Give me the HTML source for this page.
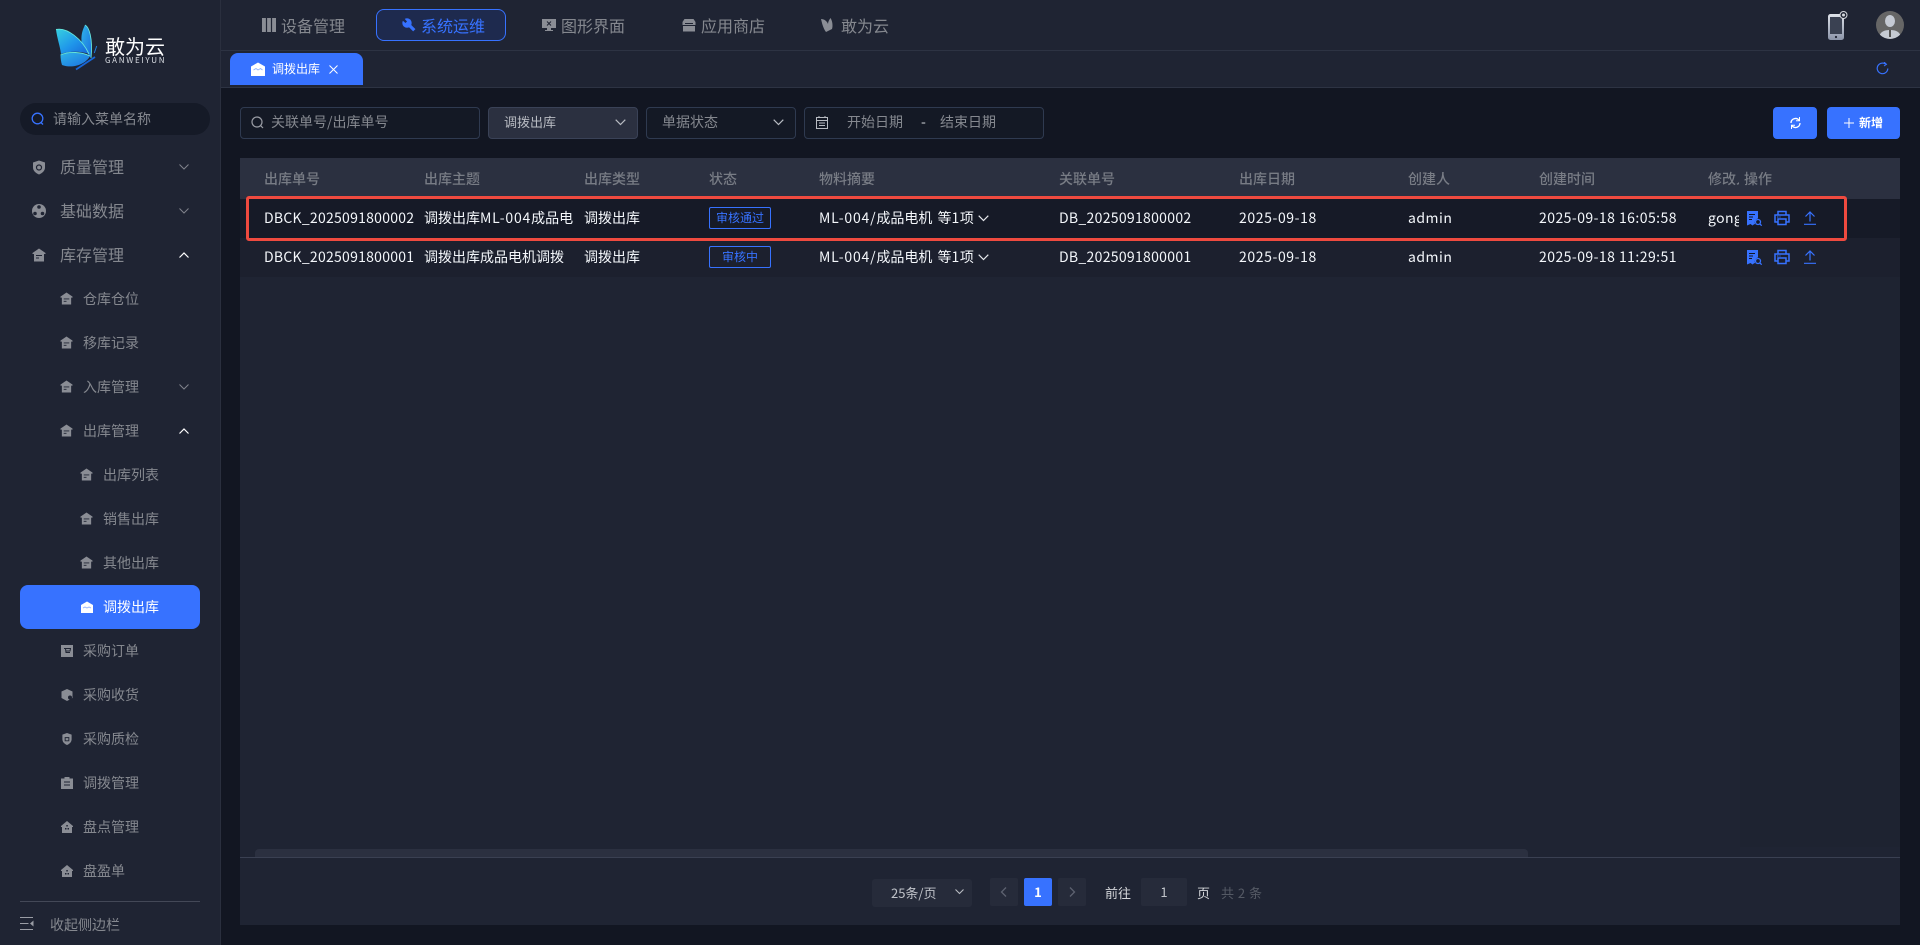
<!DOCTYPE html>
<html lang="zh-CN"><head><meta charset="utf-8"><title>调拨出库</title>
<style>
*{box-sizing:border-box}
html,body{margin:0;padding:0;width:1920px;height:945px;overflow:hidden;background:#121622;font-family:"Noto Sans CJK SC","Liberation Sans",sans-serif;font-size:14px;color:#fff}
.a,.t,svg.i{position:absolute}
.t{white-space:nowrap;line-height:20px;height:20px}
.m{color:#85888f}
.h{color:#787c85;font-weight:500;font-size:14px}
.c{color:#f4f7fb;font-size:14px}
svg{display:block}
</style></head><body>
<svg width="0" height="0" style="position:absolute"><defs>
<symbol id="house" viewBox="0 0 14 14"><path d="M7 .5 13.500 5v1H12v7.500H2V6H.5V5z" fill="#8a8d95"/><path d="M4 7h6v1H4zM4 9.500h3v1H4z" fill="#1f2433"/></symbol>
<symbol id="dn" viewBox="0 0 10 6"><path d="M.5.500 5 5 9.500.500" fill="none" stroke="#80838c" stroke-width="1"/></symbol>
<symbol id="up" viewBox="0 0 10 6"><path d="M.5 5.500 5 1l4.500 4.500" fill="none" stroke="#fff" stroke-width="1.200"/></symbol>
<symbol id="doc" viewBox="0 0 16 16"><path d="M1 1h11v7.500a4 4 0 0 0-2.500 6.200L8.500 14 6.500 15.500 4.500 14 1 15.500z" fill="#3772ff"/><path d="M3 4.500h6M3 7h4M3 9.500h3" stroke="#121622" stroke-width="1"/><circle cx="12" cy="12" r="2.500" fill="none" stroke="#3772ff" stroke-width="1.300"/><path d="M14 14l1.700 1.700" stroke="#3772ff" stroke-width="1.300"/></symbol>
<symbol id="pr" viewBox="0 0 16 16"><path d="M4 5V1.500h8V5M4 12H1V5h14v7h-3M4 9h8v5.500H4z" fill="none" stroke="#3772ff" stroke-width="1.500"/><path d="M3 7h1.500M5.500 7h1" stroke="#3772ff"/></symbol>
<symbol id="upl" viewBox="0 0 14 14"><path d="M7 10.500V1M2.500 5.500 7 1l4.500 4.500M1 13.300h12" fill="none" stroke="#3772ff" stroke-width="1.200"/></symbol>
</defs></svg>

<!-- Sidebar -->
<div class="a" style="left:0;top:0;width:221px;height:945px;background:#1f2433;border-right:1px solid #2a2f3e"></div>
<svg class="i" style="left:55px;top:24px" width="50" height="48" viewBox="0 0 50 48"><defs><linearGradient id="lg" x1="0" y1="0" x2="1" y2="1"><stop offset="0" stop-color="#36d0e0"/><stop offset=".55" stop-color="#1f96ea"/><stop offset="1" stop-color="#1766d8"/></linearGradient><linearGradient id="lg2" x1="0" y1="0" x2="1" y2="1"><stop offset="0" stop-color="#2fb4e8"/><stop offset="1" stop-color="#1a6fe0"/></linearGradient></defs>
<path d="M30 1C34 3 38 14 36 34 32 28 26 22 26.500 17 26 10 28 5 30 1z" fill="url(#lg2)"/>
<path d="M1 5.500C12 3 27 15 34 30 26 27 14 27 6 30 5 22 2 14 1 5.500z" fill="url(#lg)"/>
<path d="M5.500 31C14 27 27 28 35 32 31 40 18 45 7 41 6 38 5.500 34 5.500 31z" fill="url(#lg2)"/>
<path d="M21 45.500 40 33" stroke="#1766d8" stroke-width="1.800" fill="none"/>
<path d="M5.500 31C14 27 27 28 35 32M1 5.500C12 3 27 15 34 30M30 1C34 3 38 14 36 34" stroke="#66e6dc" stroke-width=".9" fill="none"/>
<path d="M41.700 22l-2.400 7" stroke="#1f7ee0"/></svg>
<div class="t" style="left:105px;top:34px;font-size:20px;line-height:24px;height:24px;color:#fff">敢为云</div>
<div class="t" style="left:105px;top:56px;font-size:8px;line-height:10px;height:10px;letter-spacing:1.700px;color:#d8dce2">GANWEIYUN</div>

<div class="a" style="left:20px;top:103px;width:190px;height:32px;border-radius:16px;background:#151a27"></div>
<svg class="i" style="left:31px;top:112px" width="14" height="14" viewBox="0 0 14 14"><circle cx="6.500" cy="6.500" r="5.300" fill="none" stroke="#3772ff" stroke-width="1.300"/><path d="M10 10.500l2 2" stroke="#3772ff" stroke-width="1.300"/></svg>
<div class="t m" style="left:53px;top:109px">请输入菜单名称</div>

<svg class="i" style="left:32px;top:160px" width="14" height="15" viewBox="0 0 14 15"><path d="M7 .5 13 2.500v5c0 3.500-3 5.800-6 7-3-1.200-6-3.500-6-7v-5z" fill="#8a8d95"/><circle cx="7" cy="7.500" r="2.500" fill="none" stroke="#1f2433" stroke-width="1.200"/></svg>
<div class="t m" style="left:60px;top:156px;font-size:16px">质量管理</div>
<svg class="i" style="left:179px;top:164px" width="10" height="6"><use href="#dn"/></svg>

<svg class="i" style="left:32px;top:204px" width="14" height="14" viewBox="0 0 14 14"><circle cx="7" cy="7" r="7" fill="#8a8d95"/><circle cx="7" cy="3" r="1.800" fill="#1f2433"/><circle cx="3" cy="9.500" r="1.800" fill="#1f2433"/><circle cx="10.500" cy="9.500" r="1.800" fill="#1f2433"/></svg>
<div class="t m" style="left:60px;top:200px;font-size:16px">基础数据</div>
<svg class="i" style="left:179px;top:208px" width="10" height="6"><use href="#dn"/></svg>

<svg class="i" style="left:32px;top:248px" width="14" height="14"><use href="#house"/></svg>
<div class="t m" style="left:60px;top:244px;font-size:16px">库存管理</div>
<svg class="i" style="left:179px;top:252px" width="10" height="6"><use href="#up"/></svg>

<svg class="i" style="left:60px;top:292px" width="13" height="13"><use href="#house"/></svg><div class="t m" style="left:83px;top:289px">仓库仓位</div>
<svg class="i" style="left:60px;top:336px" width="13" height="13"><use href="#house"/></svg><div class="t m" style="left:83px;top:333px">移库记录</div>
<svg class="i" style="left:60px;top:380px" width="13" height="13"><use href="#house"/></svg><div class="t m" style="left:83px;top:377px">入库管理</div>
<svg class="i" style="left:179px;top:384px" width="10" height="6"><use href="#dn"/></svg>
<svg class="i" style="left:60px;top:424px" width="13" height="13"><use href="#house"/></svg><div class="t m" style="left:83px;top:421px">出库管理</div>
<svg class="i" style="left:179px;top:428px" width="10" height="6"><use href="#up"/></svg>
<svg class="i" style="left:80px;top:468px" width="13" height="13"><use href="#house"/></svg><div class="t m" style="left:103px;top:465px">出库列表</div>
<svg class="i" style="left:80px;top:512px" width="13" height="13"><use href="#house"/></svg><div class="t m" style="left:103px;top:509px">销售出库</div>
<svg class="i" style="left:80px;top:556px" width="13" height="13"><use href="#house"/></svg><div class="t m" style="left:103px;top:553px">其他出库</div>

<div class="a" style="left:20px;top:585px;width:180px;height:44px;border-radius:8px;background:#3772ff"></div>
<svg class="i" style="left:81px;top:601px" width="12" height="12" viewBox="0 0 12 12"><path d="M6 .5 12 4v8H0V4z" fill="#fff"/><path d="M2 7l2-1 2 1 2-1 2 1" stroke="#8fb0ff" fill="none" stroke-width=".8"/></svg>
<div class="t" style="left:103px;top:597px;color:#fff">调拨出库</div>

<svg class="i" style="left:61px;top:645px" width="12" height="12" viewBox="0 0 12 12"><rect width="12" height="12" fill="#8a8d95"/><path d="M3 3.500h1.500l.5 4h4M5 3.500h4.500L9 6H5" fill="none" stroke="#1f2433"/></svg><div class="t m" style="left:83px;top:641px">采购订单</div>
<svg class="i" style="left:61px;top:689px" width="12" height="12" viewBox="0 0 12 12"><path d="M6 0l5.500 2.500V9L6 12 .5 9V2.500z" fill="#8a8d95"/><circle cx="9" cy="8.500" r="2" fill="#1f2433"/></svg><div class="t m" style="left:83px;top:685px">采购收货</div>
<svg class="i" style="left:61px;top:733px" width="12" height="12" viewBox="0 0 12 13"><path d="M6 0l5 1.800v5C11 10 8.500 12 6 13 3.500 12 1 10 1 6.800v-5z" fill="#8a8d95"/><path d="M4 5h4v3.500H4z" fill="none" stroke="#1f2433"/></svg><div class="t m" style="left:83px;top:729px">采购质检</div>
<svg class="i" style="left:61px;top:777px" width="12" height="12" viewBox="0 0 12 12"><path d="M0 1.500h3.500V0h5v1.500H12V12H0z" fill="#8a8d95"/><path d="M3 5h6M3 8h6" stroke="#1f2433"/></svg><div class="t m" style="left:83px;top:773px">调拨管理</div>
<svg class="i" style="left:61px;top:821px" width="12" height="12" viewBox="0 0 12 12"><path d="M6 0l6 5v1h-1v6H1V6H0V5z" fill="#8a8d95"/><path d="M4 7h1.500v1.500H4zM6.500 7H8v1.500H6.500zM5.300 4h1.500v1.500H5.300z" fill="#1f2433"/></svg><div class="t m" style="left:83px;top:817px">盘点管理</div>
<svg class="i" style="left:61px;top:865px" width="12" height="12" viewBox="0 0 12 12"><path d="M6 0l6 5v1h-1v6H1V6H0V5z" fill="#8a8d95"/><path d="M4 8h1.500v1.500H4zM6.500 8H8v1.500H6.500zM5.300 5h1.500v1.500H5.300z" fill="#1f2433"/></svg><div class="t m" style="left:83px;top:861px">盘盈单</div>

<div class="a" style="left:20px;top:901px;width:180px;height:1px;background:#434857"></div>
<svg class="i" style="left:20px;top:917px" width="14" height="13" viewBox="0 0 14 13"><path d="M0 .5h13M0 6.500h8.500M0 12.500h13" stroke="#9a9da5"/><path d="M13.500 3.500v6L10 6.500z" fill="#9a9da5"/></svg>
<div class="t m" style="left:50px;top:915px">收起侧边栏</div>

<!-- Top bar -->
<div class="a" style="left:221px;top:0;width:1699px;height:87px;background:#1f2433"></div>
<div class="a" style="left:221px;top:50px;width:1699px;height:1px;background:#2d3343"></div>
<div class="a" style="left:221px;top:87px;width:1699px;height:1px;background:#2d3343"></div>

<svg class="i" style="left:262px;top:18px" width="14" height="14" viewBox="0 0 14 14"><rect width="14" height="14" fill="#8a8d95"/><path d="M4.500 0v14M9.500 0v14" stroke="#1f2433" stroke-width="1.200"/></svg>
<div class="t m" style="left:281px;top:15px;font-size:16px">设备管理</div>

<div class="a" style="left:376px;top:9px;width:130px;height:32px;border:1px solid #3772ff;border-radius:8px;background:#1e2a4e"></div>
<svg class="i" style="left:402px;top:18px" width="14" height="14" viewBox="0 0 14 14"><circle cx="5" cy="5" r="4.700" fill="#3772ff"/><path d="M6 6l6.300 6.300" stroke="#3772ff" stroke-width="3.200"/><path d="M1.500-.5 5 3.500 3.500 5 -.5 1.500z" fill="#1e2a4e"/></svg>
<div class="t" style="left:421px;top:15px;font-size:16px;color:#3772ff">系统运维</div>

<svg class="i" style="left:542px;top:18px" width="14" height="14" viewBox="0 0 14 14"><path d="M0 1h14v9H9v2h2v1H3v-1h2v-2H0z" fill="#8a8d95"/><path d="M5 3.500l4 4M9 3.500l-4 4" stroke="#1f2433"/></svg>
<div class="t m" style="left:561px;top:15px;font-size:16px">图形界面</div>

<svg class="i" style="left:682px;top:18px" width="14" height="14" viewBox="0 0 14 14"><path d="M2.500 1h9L13.500 4v3H.5V4zM1 8h12v5.500H1z" fill="#8a8d95"/><path d="M3 5.500h8" stroke="#1f2433"/></svg>
<div class="t m" style="left:701px;top:15px;font-size:16px">应用商店</div>

<svg class="i" style="left:821px;top:18px" width="15" height="14" viewBox="0 0 15 14"><path d="M0 1c3 0 6 2 7 5 0-2 1-4 2.500-6C11.500 3 12 8 11 11l-6 3C2 10 1 5 0 1z" fill="#8a8d95"/></svg>
<div class="t m" style="left:841px;top:15px;font-size:16px">敢为云</div>

<svg class="i" style="left:1828px;top:11px" width="20" height="30" viewBox="0 0 20 30"><defs><linearGradient id="ph" x1="0" y1="0" x2="0" y2="1"><stop offset="0" stop-color="#dfe3ea"/><stop offset="1" stop-color="#8a93a8"/></linearGradient></defs><rect x="0" y="3" width="16" height="26" rx="2.500" fill="url(#ph)"/><rect x="2" y="6" width="12" height="17" fill="#3a4152"/><circle cx="8" cy="26" r="1.100" fill="#1f2433"/><circle cx="15.500" cy="4" r="3.500" fill="#1f2433" stroke="#d5d8de"/><circle cx="15.500" cy="4" r="1.500" fill="#d5d8de"/></svg>
<svg class="i" style="left:1876px;top:11px" width="28" height="28" viewBox="0 0 28 28"><defs><clipPath id="cc"><circle cx="14" cy="14" r="14"/></clipPath></defs><circle cx="14" cy="14" r="14" fill="#666"/><g clip-path="url(#cc)"><ellipse cx="14" cy="10" rx="5" ry="6" fill="#c5cad3"/><path d="M3 28c0-7 5-9 11-9s11 2 11 9z" fill="#c5cad3"/><path d="M13 19h2v7h-2z" fill="#555"/></g></svg>

<!-- Tab -->
<div class="a" style="left:230px;top:53px;width:133px;height:32px;background:#3772ff;border-radius:8px 8px 0 0"></div>
<svg class="i" style="left:251px;top:62px" width="14" height="14" viewBox="0 0 14 14"><path d="M7 .5 14 4.500V14H0V4.500z" fill="#fff"/><path d="M2.500 8l2.500-1.500L7 8l2.500-1.500L11.500 8" fill="none" stroke="#8fb0ff" stroke-width=".9"/></svg>
<div class="t" style="left:272px;top:59px;font-size:12px;color:#fff">调拨出库</div>
<svg class="i" style="left:329px;top:65px" width="9" height="9" viewBox="0 0 9 9"><path d="M.5.500l8 8M8.500.500l-8 8" stroke="#fff"/></svg>
<svg class="i" style="left:1876px;top:62px" width="13" height="13" viewBox="0 0 13 13"><path d="M11.800 6.500A5.300 5.300 0 1 1 9.500 2" fill="none" stroke="#3772ff" stroke-width="1.200"/><path d="M8 0l2.500 2.300L8 4" fill="none" stroke="#3772ff"/></svg>

<!-- Filters -->
<div class="a" style="left:240px;top:107px;width:240px;height:32px;border:1px solid #2f3a50;border-radius:4px;background:#141925"></div>
<svg class="i" style="left:251px;top:116px" width="14" height="14" viewBox="0 0 14 14"><circle cx="6" cy="6" r="5" fill="none" stroke="#9a9da5" stroke-width="1.200"/><path d="M9.500 9.500l2.500 2.500" stroke="#9a9da5" stroke-width="1.200"/></svg>
<div class="t m" style="left:271px;top:112px">关联单号/出库单号</div>

<div class="a" style="left:488px;top:107px;width:150px;height:32px;border:1px solid #3a4257;border-radius:4px;background:#2b3040"></div>
<div class="t" style="left:504px;top:112px;font-size:13px;color:#b8bbc2">调拨出库</div>
<svg class="i" style="left:615px;top:119px" width="11" height="7" viewBox="0 0 11 7"><path d="M.7.700 5.500 5.500 10.300.700" fill="none" stroke="#b8bbc2" stroke-width="1.200"/></svg>

<div class="a" style="left:646px;top:107px;width:150px;height:32px;border:1px solid #2f3a50;border-radius:4px;background:#141925"></div>
<div class="t m" style="left:662px;top:112px">单据状态</div>
<svg class="i" style="left:773px;top:119px" width="11" height="7" viewBox="0 0 11 7"><path d="M.7.700 5.500 5.500 10.300.700" fill="none" stroke="#b8bbc2" stroke-width="1.200"/></svg>

<div class="a" style="left:804px;top:107px;width:240px;height:32px;border:1px solid #2f3a50;border-radius:4px;background:#141925"></div>
<svg class="i" style="left:815px;top:115px" width="14" height="14" viewBox="0 0 14 14"><path d="M1.500 2.500h11v11h-11zM1.500 5.500h11M4 1v2M10 1v2M4 8h6M4 10.500h6" fill="none" stroke="#b8bbc2"/></svg>
<div class="t m" style="left:847px;top:112px">开始日期</div>
<div class="t m" style="left:921px;top:112px;color:#d8dade">-</div>
<div class="t m" style="left:940px;top:112px">结束日期</div>

<div class="a" style="left:1773px;top:107px;width:44px;height:32px;background:#3772ff;border-radius:4px"></div>
<svg class="i" style="left:1790px;top:117px" width="11" height="12" viewBox="0 0 11 12"><path d="M1 6a4.500 4.500 0 0 1 8-2.800M10 6a4.500 4.500 0 0 1-8 2.800" fill="none" stroke="#fff" stroke-width="1.300"/><path d="M9.500 0v3.700H6M1.500 12V8.300H5" fill="none" stroke="#fff"/></svg>
<div class="a" style="left:1827px;top:107px;width:73px;height:32px;background:#3772ff;border-radius:4px"></div>
<svg class="i" style="left:1844px;top:118px" width="10" height="10" viewBox="0 0 10 10"><path d="M5 0v10M0 5h10" stroke="#fff"/></svg>
<div class="t" style="left:1859px;top:113px;font-size:12px;font-weight:700;color:#fff">新增</div>

<!-- Table -->
<div class="a" style="left:240px;top:158px;width:1660px;height:767px;background:#1f2433"></div>
<div class="a" style="left:240px;top:158px;width:1660px;height:41px;background:#2b3040"></div>
<div class="a" style="left:240px;top:199px;width:1660px;height:39px;background:#161a27"></div>
<div class="a" style="left:240px;top:238px;width:1660px;height:39px;background:#1c202e"></div>
<div class="a" style="left:1740px;top:277px;width:160px;height:570px;background:#1e2331"></div>

<div class="t h" style="left:264px;top:169px">出库单号</div>
<div class="t h" style="left:424px;top:169px">出库主题</div>
<div class="t h" style="left:584px;top:169px">出库类型</div>
<div class="t h" style="left:709px;top:169px">状态</div>
<div class="t h" style="left:819px;top:169px">物料摘要</div>
<div class="t h" style="left:1059px;top:169px">关联单号</div>
<div class="t h" style="left:1239px;top:169px">出库日期</div>
<div class="t h" style="left:1408px;top:169px">创建人</div>
<div class="t h" style="left:1539px;top:169px">创建时间</div>
<div class="t h" style="left:1708px;top:169px;width:31px;overflow:hidden">修改人</div>
<div class="t h" style="left:1744px;top:169px">操作</div>

<div class="t c" style="left:264px;top:208px;letter-spacing:.26px">DBCK_2025091800002</div>
<div class="t c" style="left:424px;top:208px;width:150px;overflow:hidden">调拨出库<span style="letter-spacing:.8px">ML-004</span>成品电</div>
<div class="t c" style="left:584px;top:208px">调拨出库</div>
<div class="a" style="left:709px;top:207px;width:62px;height:22px;border:1px solid #3772ff;border-radius:2px;text-align:center;font-size:12px;line-height:20px;color:#3772ff">审核通过</div>
<div class="t c" style="left:819px;top:208px"><span style="letter-spacing:.8px">ML-004/</span>成品电机<span style="letter-spacing:2px"> </span>等<span style="letter-spacing:.5px">1</span>项</div>
<svg class="i" style="left:978px;top:215px" width="11" height="7" viewBox="0 0 11 7"><path d="M.7.700 5.500 5.500 10.300.700" fill="none" stroke="#e6e8ec" stroke-width="1.200"/></svg>
<div class="t c" style="left:1059px;top:208px;letter-spacing:.3px">DB_2025091800002</div>
<div class="t c" style="left:1239px;top:208px;letter-spacing:.6px">2025-09-18</div>
<div class="t c" style="left:1408px;top:208px;letter-spacing:.5px">admin</div>
<div class="t c" style="left:1539px;top:208px;letter-spacing:.45px">2025-09-18 16:05:58</div>
<div class="t c" style="left:1708px;top:208px;width:31px;overflow:hidden;letter-spacing:.4px">gongchang</div>

<div class="t c" style="left:264px;top:247px;letter-spacing:.26px">DBCK_2025091800001</div>
<div class="t c" style="left:424px;top:247px;width:150px;overflow:hidden">调拨出库成品电机调拨</div>
<div class="t c" style="left:584px;top:247px">调拨出库</div>
<div class="a" style="left:709px;top:246px;width:62px;height:22px;border:1px solid #3772ff;border-radius:2px;text-align:center;font-size:12px;line-height:20px;color:#3772ff">审核中</div>
<div class="t c" style="left:819px;top:247px"><span style="letter-spacing:.8px">ML-004/</span>成品电机<span style="letter-spacing:2px"> </span>等<span style="letter-spacing:.5px">1</span>项</div>
<svg class="i" style="left:978px;top:254px" width="11" height="7" viewBox="0 0 11 7"><path d="M.7.700 5.500 5.500 10.300.700" fill="none" stroke="#e6e8ec" stroke-width="1.200"/></svg>
<div class="t c" style="left:1059px;top:247px;letter-spacing:.3px">DB_2025091800001</div>
<div class="t c" style="left:1239px;top:247px;letter-spacing:.6px">2025-09-18</div>
<div class="t c" style="left:1408px;top:247px;letter-spacing:.5px">admin</div>
<div class="t c" style="left:1539px;top:247px;letter-spacing:.45px">2025-09-18 11:29:51</div>

<svg class="i" style="left:1746px;top:210px" width="16" height="16"><use href="#doc"/></svg>
<svg class="i" style="left:1774px;top:210px" width="16" height="16"><use href="#pr"/></svg>
<svg class="i" style="left:1803px;top:211px" width="14" height="14"><use href="#upl"/></svg>
<svg class="i" style="left:1746px;top:249px" width="16" height="16"><use href="#doc"/></svg>
<svg class="i" style="left:1774px;top:249px" width="16" height="16"><use href="#pr"/></svg>
<svg class="i" style="left:1803px;top:250px" width="14" height="14"><use href="#upl"/></svg>

<div class="a" style="left:246px;top:196px;width:1601px;height:45px;border:3px solid #ef4a3f;border-radius:3px"></div>

<div class="a" style="left:255px;top:849px;width:1273px;height:8px;background:#2b3040;border-radius:4px 4px 0 0"></div>
<div class="a" style="left:240px;top:857px;width:1660px;height:1px;background:#3a4052"></div>

<!-- Pagination -->
<div class="a" style="left:872px;top:879px;width:100px;height:28px;background:#262b3a;border-radius:3px"></div>
<div class="t" style="left:891px;top:882px;font-size:13px;line-height:22px;height:22px;color:#c0c3c9">25条/页</div>
<svg class="i" style="left:955px;top:889px" width="9" height="6" viewBox="0 0 9 6"><path d="M.5.500 4.500 4.500 8.500.500" fill="none" stroke="#b8bbc2" stroke-width="1.100"/></svg>
<div class="a" style="left:990px;top:878px;width:28px;height:28px;background:#262b3a;border-radius:2px"></div>
<svg class="i" style="left:1000px;top:887px" width="7" height="10" viewBox="0 0 7 10"><path d="M6 .500 1.500 5 6 9.500" fill="none" stroke="#5d6270" stroke-width="1.300"/></svg>
<div class="a" style="left:1024px;top:878px;width:28px;height:28px;background:#3772ff;border-radius:2px;color:#fff;font-weight:700;font-size:13px;line-height:28px;text-align:center">1</div>
<div class="a" style="left:1058px;top:878px;width:28px;height:28px;background:#262b3a;border-radius:2px"></div>
<svg class="i" style="left:1069px;top:887px" width="7" height="10" viewBox="0 0 7 10"><path d="M1 .500 5.500 5 1 9.500" fill="none" stroke="#5d6270" stroke-width="1.300"/></svg>
<div class="t" style="left:1105px;top:882px;font-size:13px;line-height:22px;height:22px;color:#d4d6da">前往</div>
<div class="a" style="left:1141px;top:878px;width:46px;height:28px;background:#262b3a;border-radius:2px;color:#c0c3c9;font-size:13px;line-height:28px;text-align:center">1</div>
<div class="t" style="left:1197px;top:882px;font-size:13px;line-height:22px;height:22px;color:#d4d6da">页</div>
<div class="t" style="left:1221px;top:882px;font-size:13px;line-height:22px;height:22px;letter-spacing:.5px;color:#555a65">共 2 条</div>
</body></html>
